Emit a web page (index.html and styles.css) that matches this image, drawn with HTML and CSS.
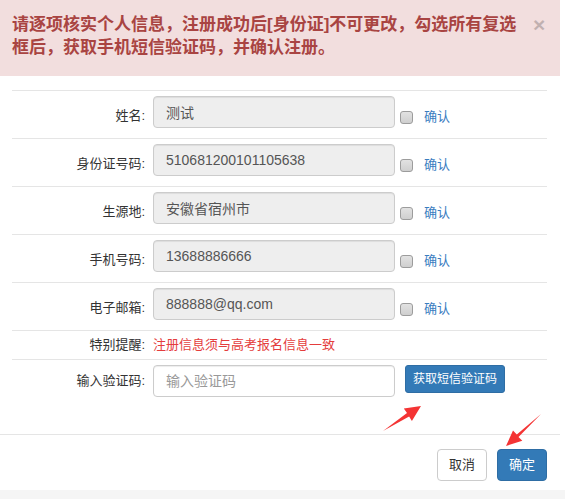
FILE: index.html
```html
<!DOCTYPE html>
<html lang="zh-CN">
<head>
<meta charset="UTF-8">
<title>注册确认</title>
<link rel="stylesheet" href="styles.css">
</head>
<body>
<div class="modal">
    <div class="alert">
        <div class="alert-text">请逐项核实个人信息，注册成功后[身份证]不可更改，勾选所有复选框后，获取手机短信验证码，并确认注册。</div>
        <button class="close">×</button>
    </div>
    <div class="modal-body">
        <div class="row">
            <label class="row-label">姓名:</label>
            <input class="field" value="测试" readonly>
            <input type="checkbox" class="confirm-box">
            <span class="confirm-text">确认</span>
        </div>
        <div class="row">
            <label class="row-label">身份证号码:</label>
            <input class="field" value="510681200101105638" readonly>
            <input type="checkbox" class="confirm-box">
            <span class="confirm-text">确认</span>
        </div>
        <div class="row">
            <label class="row-label">生源地:</label>
            <input class="field" value="安徽省宿州市" readonly>
            <input type="checkbox" class="confirm-box">
            <span class="confirm-text">确认</span>
        </div>
        <div class="row">
            <label class="row-label">手机号码:</label>
            <input class="field" value="13688886666" readonly>
            <input type="checkbox" class="confirm-box">
            <span class="confirm-text">确认</span>
        </div>
        <div class="row">
            <label class="row-label">电子邮箱:</label>
            <input class="field" value="888888@qq.com" readonly>
            <input type="checkbox" class="confirm-box">
            <span class="confirm-text">确认</span>
        </div>
        <div class="row row-hint">
            <span class="row-label">特别提醒:</span>
            <span class="hint">注册信息须与高考报名信息一致</span>
        </div>
        <div class="row row-code">
            <label class="row-label">输入验证码:</label>
            <input class="field field-code" placeholder="输入验证码">
            <button class="btn btn-primary btn-sm">获取短信验证码</button>
        </div>
    </div>
    <div class="modal-footer">
        <button class="btn btn-default">取消</button>
        <button class="btn btn-primary">确定</button>
    </div>
</div>
<div class="page-bottom"></div>

<svg class="arrows" width="565" height="499" viewBox="0 0 565 499">
    <polygon points="383,431 407.0,413.0 403.8,408.4 421,406 411.9,421.0 409.1,416.6" />
    <polygon points="541,414 516.8,434.5 513.0,430.6 506,446 522.3,440.7 518.5,436.9" />
</svg>
</body>
</html>
```

FILE: styles.css
```css
body { margin: 0; background: #fff; font-family: "Liberation Sans", "Noto Sans CJK SC", sans-serif; color: #333; position: relative; width: 565px; height: 499px; overflow: hidden; }
.modal { width: 560px; background: #fff; }

.alert { display: flex; align-items: flex-start; background: #f2dede; color: #a94442; padding: 13px 15px 17px 12px; }
.alert-text { flex: 1; font-size: 17px; font-weight: bold; line-height: 23px; }
.close { margin: 1px 0 0 8px; padding: 0; width: 12px; border: none; background: none; font-family: "Liberation Sans", sans-serif; font-size: 21px; font-weight: bold; line-height: 1; color: #000; opacity: .2; }

.modal-body { padding: 14px 13px 27px 12px; }
.row { display: flex; align-items: flex-start; border-top: 1px solid #e5e5e5; padding: 5px 0 10px; }
.row-label { width: 133px; margin-right: 8px; text-align: right; font-size: 13px; line-height: 20px; padding-top: 10px; color: #333; }
.field { box-sizing: border-box; width: 242px; height: 32px; padding: 6px 12px; border: 1px solid #ccc; border-radius: 4px; background: #eee; color: #555; font-family: inherit; font-size: 14px; box-shadow: inset 0 1px 1px rgba(0,0,0,.075); margin: 0; }
.field-code { background: #fff; }
.field-code::placeholder { color: #999; }
.confirm-box { appearance: none; box-sizing: border-box; width: 13px; height: 13px; margin: 15px 0 0 5px; border: 1px solid #9c9c9c; border-radius: 3px; background: linear-gradient(#e2e2e2, #cfcfcf); }
.confirm-text { margin-left: 11px; padding-top: 11px; font-size: 13px; line-height: 20px; color: #3a7dbf; }

.row-hint { padding: 4px 0; }
.row-hint .row-label { padding-top: 0; }
.hint { font-size: 13px; line-height: 20px; color: #e43d3d; }
.row-code .row-label { padding-top: 6px; }

.btn { box-sizing: border-box; height: 32px; padding: 0 11px; border: 1px solid #ccc; border-radius: 4px; font-family: inherit; font-size: 13px; line-height: 30px; background: #fff; color: #333; }
.btn-primary { background: #337ab7; border-color: #2e6da4; color: #fff; }
.btn-sm { height: 28px; line-height: 26px; padding: 0 7px; font-size: 12px; margin-left: 10px; border-radius: 3px; }

.modal-footer { display: flex; justify-content: flex-end; gap: 10px; border-top: 1px solid #e5e5e5; padding: 14px 13px 9px 0; }
.page-bottom { height: 20px; background: #f5f5f5; }

.arrows { position: absolute; top: 0; left: 0; pointer-events: none; }
.arrows polygon { fill: #f43434; }
```
